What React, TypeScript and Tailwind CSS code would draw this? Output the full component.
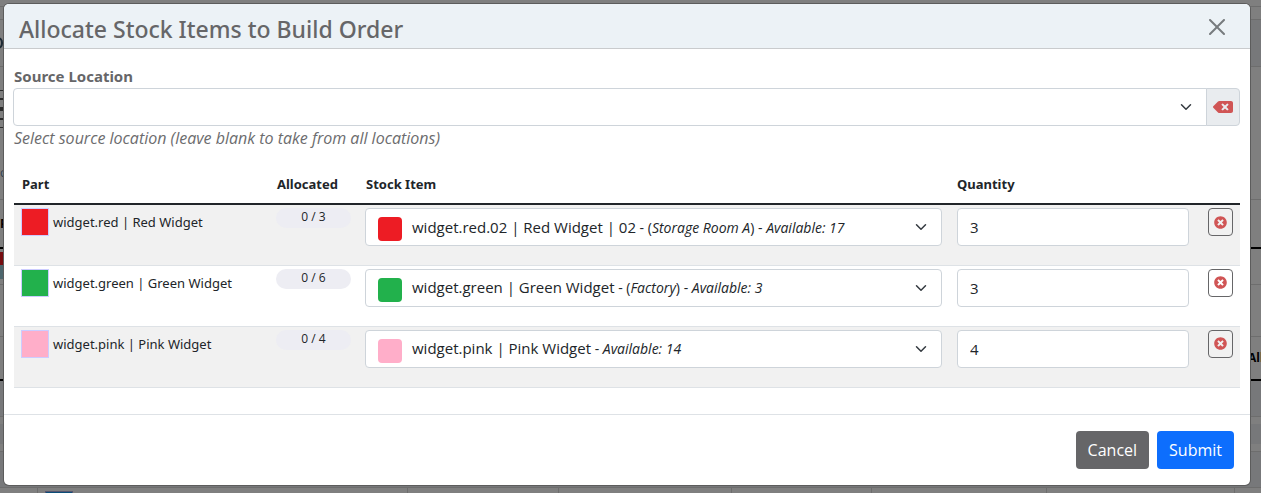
import React from 'react';

type Row = {
  id: string;
  part: string;
  allocated: string;
  swatch: string;
  stock: string;
  location?: string;
  available: number;
  quantity: number;
};

const rows: Row[] = [
  { id: 'red', part: 'widget.red | Red Widget', allocated: '0 / 3', swatch: 'bg-[#ed1c24]', stock: 'widget.red.02 | Red Widget | 02', location: 'Storage Room A', available: 17, quantity: 3 },
  { id: 'green', part: 'widget.green | Green Widget', allocated: '0 / 6', swatch: 'bg-[#22b14c]', stock: 'widget.green | Green Widget', location: 'Factory', available: 3, quantity: 3 },
  { id: 'pink', part: 'widget.pink | Pink Widget', allocated: '0 / 4', swatch: 'bg-[#ffaec9]', stock: 'widget.pink | Pink Widget', available: 14, quantity: 4 },
];

const bottomColumns = ['w-[38px]', 'w-[370px]', 'w-[151px]', 'w-[173px]', 'w-[140px]', 'w-[175px]', 'w-[188px]'];

function Chevron() {
  return (
    <svg viewBox="0 0 16 16" className="mr-1 h-3 w-3 shrink-0 text-[#343a40]" fill="none" stroke="currentColor" strokeWidth="2" strokeLinecap="round" strokeLinejoin="round" aria-hidden="true">
      <path d="m2 5 6 6 6-6" />
    </svg>
  );
}

function Backspace() {
  return (
    <svg viewBox="0 0 640 512" className="h-4 w-5" fill="#d05555" aria-hidden="true">
      <path d="M576 64H205.260A63.970 63.970 0 0 0 160 82.750L9.370 233.370c-12.500 12.500-12.500 32.760 0 45.250L160 429.250c12 12 28.280 18.750 45.250 18.750H576c35.350 0 64-28.650 64-64V128c0-35.350-28.650-64-64-64zm-84.690 254.060c6.250 6.250 6.250 16.380 0 22.630l-22.620 22.620c-6.250 6.250-16.380 6.250-22.630 0L384 301.250l-62.060 62.060c-6.250 6.250-16.380 6.250-22.630 0l-22.620-22.620c-6.250-6.250-6.250-16.380 0-22.630L338.750 256l-62.060-62.060c-6.250-6.250-6.250-16.380 0-22.630l22.620-22.620c6.250-6.250 16.380-6.250 22.630 0L384 210.750l62.060-62.060c6.250-6.250 16.380-6.250 22.630 0l22.620 22.620c6.250 6.250 6.250 16.380 0 22.630L429.250 256l62.060 62.060z" />
    </svg>
  );
}

function TimesCircle() {
  return (
    <svg viewBox="0 0 512 512" className="h-[13px] w-[13px]" fill="#d05555" aria-hidden="true">
      <path d="M256 8C119 8 8 119 8 256s111 248 248 248 248-111 248-248S393 8 256 8zm121.600 313.100c4.700 4.700 4.700 12.300 0 17L338 377.600c-4.700 4.700-12.300 4.700-17 0L256 312l-65.100 65.600c-4.700 4.700-12.300 4.700-17 0L134.400 338c-4.700-4.700-4.700-12.300 0-17l65.600-65-65.600-65.100c-4.700-4.700-4.700-12.300 0-17l39.600-39.600c4.700-4.700 12.300-4.700 17 0l65 65.700 65.100-65.600c4.700-4.700 12.300-4.700 17 0l39.600 39.600c4.700 4.700 4.700 12.300 0 17L312 256l65.600 65.100z" />
    </svg>
  );
}

/* The dimmed page that shows round the edges of the dialog. */
function DimmedPage() {
  return (
    <div aria-hidden="true" className="absolute inset-0 flex flex-col overflow-hidden bg-[#7f7f7f] text-xs text-black *:shrink-0 *:border-[#6d6d6d]">
      <div className="h-[7px] border-b" />
      <div className="h-[13px] border-b" />
      <div className="flex h-[47px] items-center border-b bg-[linear-gradient(to_right,#7f7f7f_50%,#77787a_50%)]">
        <span className="-ml-2 h-3 w-[11px] rounded-full border-2 border-[#1d2a35]" />
      </div>
      <div className="flex h-[61px] flex-col justify-between pt-[23px] *:w-1 *:bg-[#2c2c2c]">
        <span className="h-px" />
        <span className="h-0.5" />
        <span className="h-1" />
        <span className="h-0.5" />
        <span className="h-px" />
      </div>
      <div className="flex h-[72px] items-end border-b pb-[18px] text-[#2f3f4f]">c</div>
      <div className="flex h-[49px] items-center border-b-2 !border-black font-bold">P</div>
      <div className="h-[36px] border-b pt-[3px]">
        <div className="h-[13px] w-1 bg-[#760c10]" />
        <div className="h-[14px] w-1 bg-[#4d666d]" />
      </div>
      <div className="h-[52px] border-b" />
      <div className="flex h-[44px] items-center justify-end border-b-2 !border-black font-bold">
        <span className="w-[13px]">All</span>
      </div>
      <div className="h-[36px] border-b bg-[#77787a]" />
      <div className="h-[35px] border-b py-[7px]">
        <div className="h-5 bg-[#77787a]" />
      </div>
      <div className="h-[36px] border-b bg-[#77787a]" />
      <div className="flex grow">
        {bottomColumns.map((w, i) => (
          <span key={i} className={`border-r border-[#6d6d6d] pt-[3px] pl-[7px] ${w}`}>
            {i === 1 && <i className="block h-7 w-7 border border-[#555570] bg-[#0a4d78]" />}
          </span>
        ))}
      </div>
    </div>
  );
}

export default function App() {
  return (
    <div className="relative min-h-screen overflow-hidden pt-1 pr-[11px] pb-2 pl-1 font-['Open_Sans','Noto_Sans',sans-serif] text-[#212529]">
      <DimmedPage />
      <main role="dialog" aria-labelledby="title" className="relative rounded-[5px] bg-white shadow-[0_0_0_1px_#5c5c5c]">
        <header className="flex h-[45px] items-center justify-between rounded-t-[5px] border-b border-[#c9cbcd] bg-[#ecf2f6] pt-0.5 pr-[25px] pl-[15px]">
          <h1 id="title" className="pt-1 font-['Noto_Sans','Open_Sans',sans-serif] text-[23px] leading-8 font-medium text-[#666668]">Allocate Stock Items to Build Order</h1>
          <button type="button" aria-label="Close" className="text-[#777b7e]">
            <svg viewBox="0 0 16 16" className="h-4 w-4" fill="currentColor" aria-hidden="true">
              <path d="M.293.293a1 1 0 0 1 1.414 0L8 6.586 14.293.293a1 1 0 1 1 1.414 1.414L9.414 8l6.293 6.293a1 1 0 0 1-1.414 1.414L8 9.414l-6.293 6.293a1 1 0 0 1-1.414-1.414L6.586 8 .293 1.707a1 1 0 0 1 0-1.414z" />
            </svg>
          </button>
        </header>

        <div className="px-[10px] pt-[15px] pb-[26px]">
          <label htmlFor="source" className="block font-['Noto_Sans','Open_Sans',sans-serif] text-[15px] leading-6 font-bold text-[#666668]">Source Location</label>
          <div className="-ml-px flex h-[38px]">
            <button id="source" type="button" aria-haspopup="listbox" className="flex grow items-center justify-end rounded-l border border-[#ced4da] bg-white px-[10px]">
              <Chevron />
            </button>
            <button type="button" aria-label="Clear location" className="-ml-px flex w-[34px] items-center justify-center rounded-r border border-[#ced4da] bg-[#e9ecef]">
              <Backspace />
            </button>
          </div>
          <p className="text-[16px] leading-6 text-[#6c6c6e] italic">Select source location (leave blank to take from all locations)</p>

          <table className="mt-4 w-full table-fixed border-collapse text-left">
            <thead>
              <tr className="h-[38px] border-b-2 border-[#212529] font-['Noto_Sans','Open_Sans',sans-serif] text-[13px] font-bold">
                <th scope="col" className="w-[255px] px-2">Part</th>
                <th scope="col" className="w-[89px] px-2">Allocated</th>
                <th scope="col" className="px-2">Stock Item</th>
                <th scope="col" className="w-[248px] px-2">Quantity</th>
                <th scope="col" className="w-[43px]" aria-label="Remove" />
              </tr>
            </thead>
            <tbody>
              {rows.map((r) => (
                <tr key={r.id} className="h-[61px] border-b border-[#dee2e6] align-top odd:bg-[#f1f1f1]">
                  <td className="px-[7px] pt-[3px]">
                    <div className="flex items-center gap-1 font-['Noto_Sans','Open_Sans',sans-serif] text-[13px] leading-6">
                      <span className={`h-7 w-7 shrink-0 border border-[#ccccff] ${r.swatch}`} />
                      <span>{r.part}</span>
                    </div>
                  </td>
                  <td className="px-[7px] pt-[3px]">
                    <div className="h-5 rounded-full bg-[#ededf3] text-center text-xs leading-[18px]">{r.allocated}</div>
                  </td>
                  <td className="px-[7px] pt-[3px]">
                    <button type="button" aria-haspopup="listbox" className="flex h-[38px] w-full items-center rounded border border-[#ced4da] bg-white pr-[10px] pl-3 text-left">
                      <span className={`mt-1 mr-[10px] h-6 w-6 shrink-0 rounded ${r.swatch}`} />
                      <span className="grow text-[15px] leading-6 whitespace-nowrap">
                        {r.stock}
                        <span className="text-[14px]">
                          {r.location && <> - (<i>{r.location}</i>)</>} - <i>Available: {r.available}</i>
                        </span>
                      </span>
                      <Chevron />
                    </button>
                  </td>
                  <td className="px-2 pt-[3px]">
                    <input aria-label={`Quantity for ${r.part}`} defaultValue={r.quantity} className="h-[38px] w-full rounded border border-[#ced4da] bg-white px-3 text-[15px]" />
                  </td>
                  <td className="pt-[3px] pr-[7px] pl-[11px]">
                    <button type="button" aria-label={`Remove ${r.part}`} className="flex h-7 w-[25px] items-center justify-center rounded border border-[#666668]">
                      <TimesCircle />
                    </button>
                  </td>
                </tr>
              ))}
            </tbody>
          </table>
        </div>

        <footer className="flex justify-end gap-2 border-t border-[#dee2e6] p-4">
          <button type="button" className="h-[38px] rounded bg-[#666668] px-3 text-[16px] text-white">Cancel</button>
          <button type="button" className="h-[38px] rounded bg-[#0d6efd] px-3 text-[16px] text-white">Submit</button>
        </footer>
      </main>
    </div>
  );
}
